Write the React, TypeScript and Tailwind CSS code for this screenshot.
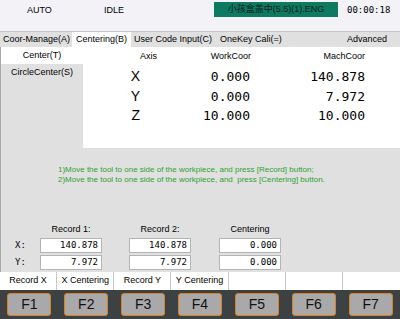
import React from "react";

const sans = { fontFamily: '"Liberation Sans", "Noto Sans CJK SC", sans-serif' };
const mono = { fontFamily: '"DejaVu Sans Mono", "Liberation Mono", monospace' };

const rows = [
  { axis: "X", work: "0.000", mach: "140.878" },
  { axis: "Y", work: "0.000", mach: "7.972" },
  { axis: "Z", work: "10.000", mach: "10.000" },
];

const softKeys = ["Record X", "X Centering", "Record Y", "Y Centering", "", "", ""];

function Field({ value }: { value: string }) {
  return (
    <div
      className="w-[62px] h-[15px] bg-white border border-[#b4b4b4] flex items-center justify-end pr-[3px] text-[9px] text-black"
      style={mono}
    >
      {value}
    </div>
  );
}

export default function App() {
  return (
    <div className="w-[400px] h-[319px] flex flex-col overflow-hidden text-black" style={sans}>
      {/* status header */}
      <div className="h-[31px] bg-[#f2f2f7] flex items-start pt-[2px] text-[9px]">
        <span className="w-[104px] pl-[27px] pt-[2px]">AUTO</span>
        <span className="w-[110px] pt-[2px]">IDLE</span>
        <div className="w-[124px] h-[15px] bg-[#0e7a62] flex items-center justify-center text-[#0b1a14]">
          小孩盒盖中(5.5)(1).ENG
        </div>
        <span className="pl-[9px] pt-[2px] text-[9px]" style={mono}>
          00:00:18
        </span>
      </div>

      {/* tabs */}
      <div className="h-[16px] bg-[#e0e0e0] border-t border-[#c4c4c4] flex items-stretch text-[9px]">
        <div className="pl-[3px] w-[72px] flex items-center">Coor-Manage(A)</div>
        <div className="w-[59px] bg-white flex items-center justify-center">Centering(B)</div>
        <div className="pl-[3px] w-[86px] flex items-center">User Code Input(C)</div>
        <div className="pl-[3px] flex items-center">OneKey Cali(=)</div>
        <div className="ml-auto pr-[13px] flex items-center">Advanced</div>
      </div>

      {/* body */}
      <div className="flex-1 flex flex-col bg-[#e0e0e0] border-l border-[#a8a8a8]">
        <div className="h-[101px] flex">
          <div className="w-[82px] flex flex-col text-[9px]">
            <div className="h-[17px] bg-white flex items-center justify-center">Center(T)</div>
            <div className="h-[17px] flex items-center justify-center">CircleCenter(S)</div>
          </div>
          <div className="flex-1 bg-white">
            <div className="h-[20px] flex items-center text-[9px]">
              <span className="w-[74px] text-right">Axis</span>
              <span className="w-[94px] text-right">WorkCoor</span>
              <span className="w-[114px] text-right">MachCoor</span>
            </div>
            {rows.map((r) => (
              <div key={r.axis} className="h-[19.5px] flex items-center">
                <span className="w-[57px] text-right text-[14px]">{r.axis}</span>
                <span className="w-[110px] text-right text-[13px]" style={mono}>
                  {r.work}
                </span>
                <span className="w-[115px] text-right text-[13px]" style={mono}>
                  {r.mach}
                </span>
              </div>
            ))}
          </div>
        </div>

        <div className="pl-[57px] pt-[17px] text-[8px] leading-[10px] text-[#2fa12f]">
          <div>1)Move the tool to one side of the workpiece, and press [Record] button;</div>
          <div>2)Move the tool to one side of the workpiece, and&nbsp; press [Centering] button.</div>
        </div>

        <div className="mt-auto pb-[1px] grid grid-cols-[39px_89px_90px_62px] text-[9px]">
          <div />
          <div className="w-[62px] text-center h-[14px]">Record 1:</div>
          <div className="w-[62px] text-center">Record 2:</div>
          <div className="text-center">Centering</div>

          <div className="h-[17px] flex items-center pl-[14px]" style={mono}>X:</div>
          <div className="flex items-center"><Field value="140.878" /></div>
          <div className="flex items-center"><Field value="140.878" /></div>
          <div className="flex items-center"><Field value="0.000" /></div>

          <div className="h-[17px] flex items-center pl-[14px]" style={mono}>Y:</div>
          <div className="flex items-center"><Field value="7.972" /></div>
          <div className="flex items-center"><Field value="7.972" /></div>
          <div className="flex items-center"><Field value="0.000" /></div>
        </div>
      </div>

      {/* soft key labels */}
      <div className="h-[18px] bg-white grid grid-cols-7 text-[9px]">
        {softKeys.map((k, i) => (
          <div
            key={i}
            className={`flex items-center justify-center ${i < 6 ? "border-r border-[#c8c8c8]" : ""}`}
          >
            {k}
          </div>
        ))}
      </div>

      {/* function keys */}
      <div className="h-[29px] bg-[#3c4144] grid grid-cols-7 px-[1px] items-center">
        {["F1", "F2", "F3", "F4", "F5", "F6", "F7"].map((f) => (
          <div key={f} className="flex justify-center">
            <div className="w-[44px] h-[23px] bg-[#a9a9a9] border border-[#e0801c] rounded-[3px] flex items-center justify-center text-[14px] text-[#111]">
              {f}
            </div>
          </div>
        ))}
      </div>
    </div>
  );
}
